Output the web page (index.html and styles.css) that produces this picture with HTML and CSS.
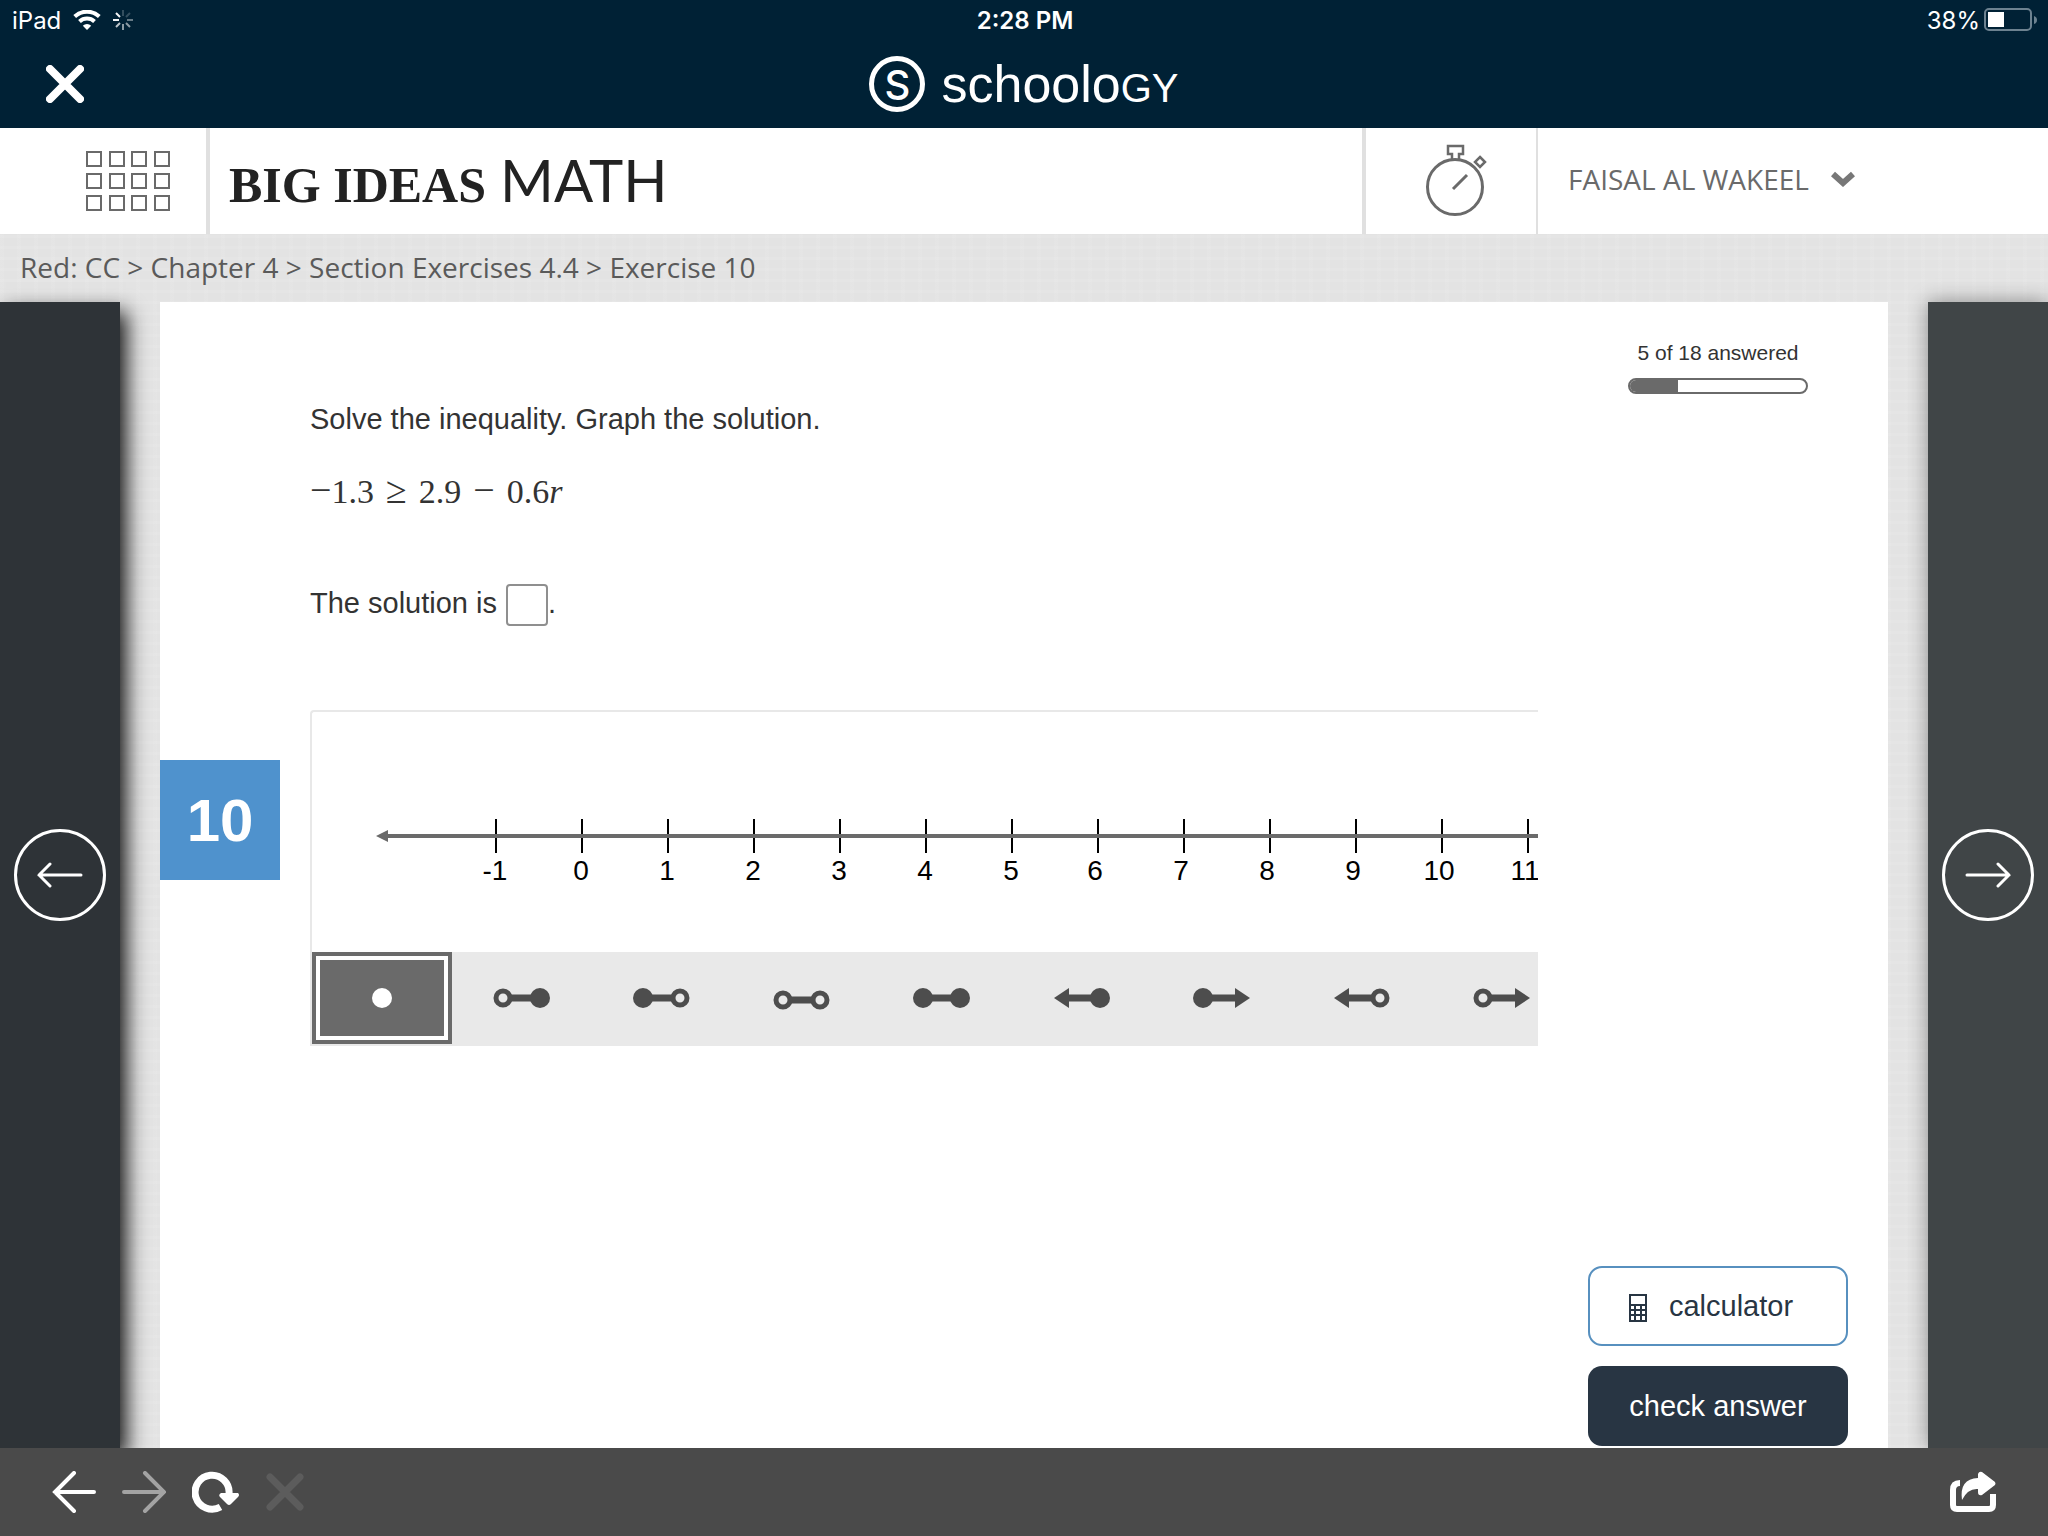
FILE: index.html
```
<!DOCTYPE html>
<html lang="en">
<head>
  <meta charset="UTF-8">
  <meta name="viewport" content="width=device-width, initial-scale=1.0">
  <title>Big Ideas Math - Exercise 10</title>
  <link rel="stylesheet" href="styles.css">
</head>
<body>
  <div class="status-bar">
    <div class="status-left">
      <span>iPad</span>
      <svg width="28" height="20" viewBox="0 0 28 20">
        <path d="M14 20l-4.2-4.3a6 6 0 0 1 8.4 0z" fill="#fff"/>
        <path d="M6.500 11.500a11 11 0 0 1 15 0M1.700 6.500a18 18 0 0 1 24.600 0" fill="none" stroke="#fff" stroke-width="4"/>
      </svg>
      <svg width="20" height="20" viewBox="0 0 20 20" stroke="#fff" stroke-width="2">
        <path d="M0 10h6M3 3l4 4" opacity=".95"/>
        <path d="M3 17l4-4" opacity=".75"/>
        <path d="M10 20v-6M17 17l-4-4" opacity=".55"/>
        <path d="M20 10h-6" opacity=".4"/>
        <path d="M17 3l-4 4M10 0v6" opacity=".2"/>
      </svg>
    </div>
    <div class="status-time">2:28 PM</div>
    <div class="status-right">
      <span>38%</span>
      <svg width="54" height="24" viewBox="0 0 54 24">
        <rect x="1" y="1" width="46" height="21" rx="4" fill="none" stroke="#6d8290" stroke-width="2"/>
        <rect x="4" y="4" width="16" height="15" fill="#fff"/>
        <path d="M50 8q3 1 3 4t-3 4z" fill="#6d8290"/>
      </svg>
    </div>
  </div>

  <header class="app-header">
    <button class="icon-button" aria-label="Close">
      <svg width="38" height="38" viewBox="0 0 38 38" stroke="#fff" stroke-width="8" stroke-linecap="round"><path d="M4 4l30 30M34 4L4 34"/></svg>
    </button>
    <div class="schoology">
      <span class="schoology-mark">S</span>
      <span class="schoology-name">schoolo<small>GY</small></span>
    </div>
  </header>

  <nav class="site-header">
    <button class="menu-button" aria-label="Menu">
      <svg width="86" height="62" viewBox="0 0 86 62" fill="none" stroke="#6a6a6a" stroke-width="2">
        <path d="M2 2h14v14H2zM25 2h14v14H25zM47 2h14v14H47zM70 2h14v14H70zM2 24h14v14H2zM25 24h14v14H25zM47 24h14v14H47zM70 24h14v14H70zM2 46h14v14H2zM25 46h14v14H25zM47 46h14v14H47zM70 46h14v14H70z"/>
      </svg>
    </button>
    <a class="brand" href="#"><b>BIG IDEAS</b> <span>MATH</span></a>
    <button class="timer-button" aria-label="Timer">
      <svg width="64" height="74" viewBox="0 0 64 74" fill="none" stroke="#6a6a6a" stroke-width="3">
        <circle cx="30" cy="43" r="27.500"/>
        <path d="M27 15v-5h-4V2h15v8h-4v5" stroke-width="2.500"/>
        <path d="M55 13l5 5-5 5-5-5z" stroke-width="2.500"/>
        <path d="M28 45l14-14"/>
      </svg>
    </button>
    <button class="user-button">
      FAISAL AL WAKEEL
      <svg width="24" height="16" viewBox="0 0 24 16" fill="none" stroke="#777" stroke-width="6"><path d="M2 3l10 9 10-9"/></svg>
    </button>
  </nav>

  <div class="breadcrumb">Red: CC &gt; Chapter 4 &gt; Section Exercises 4.4 &gt; Exercise 10</div>

  <main>
    <aside class="side prev">
      <button class="round" aria-label="Previous exercise">
        <svg width="46" height="26" viewBox="0 0 46 26" fill="none" stroke="#fff" stroke-width="3" stroke-linecap="round"><path d="M44 13H2M13 2L2 13l11 11"/></svg>
      </button>
    </aside>

    <section class="card">
      <div class="number">10</div>

      <div class="exercise">
        <p class="prompt">Solve the inequality. Graph the solution.</p>
        <p class="formula"><span class="op">−</span>1.3<span class="op spaced">≥</span>2.9<span class="op spaced">−</span>0.6<i>r</i></p>
        <p class="answer"><label for="solution">The solution is</label> <input type="text" id="solution">.</p>

        <div class="graph">
          <svg id="numberLine" width="1300" height="240"></svg>
          <div class="tools" id="tools"></div>
        </div>
      </div>

      <div class="actions">
        <div class="progress">
          <span>5 of 18 answered</span>
          <div class="progress-bar"><div style="width: 27%"></div></div>
        </div>
        <div class="buttons">
          <button class="calculator">
            <svg width="18" height="28" viewBox="0 0 18 28" fill="none" stroke="#283543" stroke-width="2"><path d="M1 1h16v26H1zM1 11h16M1 16h16M1 21h16M6 11v16M12 11v16"/></svg>
            calculator
          </button>
          <button class="check">check answer</button>
        </div>
      </div>
    </section>

    <aside class="side next">
      <button class="round" aria-label="Next exercise">
        <svg width="46" height="26" viewBox="0 0 46 26" fill="none" stroke="#fff" stroke-width="3" stroke-linecap="round"><path d="M2 13h42M33 2l11 11-11 11"/></svg>
      </button>
    </aside>
  </main>

  <footer class="browser-bar">
    <button class="icon-button" aria-label="Back">
      <svg width="44" height="42" viewBox="0 0 44 42" fill="none" stroke="#fff" stroke-width="4" stroke-linecap="round"><path d="M42 21H3M22 2L3 21l19 19"/></svg>
    </button>
    <button class="icon-button" aria-label="Forward">
      <svg width="44" height="42" viewBox="0 0 44 42" fill="none" stroke="#a3a3a3" stroke-width="4" stroke-linecap="round"><path d="M2 21h39M23 2l19 19-19 19"/></svg>
    </button>
    <button class="icon-button" aria-label="Reload">
      <svg width="48" height="42" viewBox="0 0 48 42">
        <path d="M37 23A17 17 0 1 0 28.500 36" fill="none" stroke="#fff" stroke-width="7"/>
        <path d="M29 22h17q2 2 0 4l-7 7q-2 2-4 0l-7-7q-2-2 1-4z" fill="#fff"/>
      </svg>
    </button>
    <button class="icon-button" aria-label="Stop">
      <svg width="38" height="38" viewBox="0 0 38 38" stroke="#5c5c5c" stroke-width="7" stroke-linecap="round"><path d="M4 4l30 30M34 4L4 34"/></svg>
    </button>
    <button class="icon-button share" aria-label="Share">
      <svg width="46" height="42" viewBox="0 0 46 42">
        <path d="M10 12q-7 0-7 7v15q0 4 4 4h32q4 0 4-4V23" fill="none" stroke="#fff" stroke-width="6"/>
        <path d="M12 29Q9 8 28 7V3q1-3 4-2l13 10q1 2 0 3L32 24q-4 1-4-3v-3q-10-1-16 11z" fill="#fff"/>
      </svg>
    </button>
  </footer>

  <script>
    const line = document.getElementById("numberLine");
    const tools = document.getElementById("tools");

    function renderLine() {
      const y = 124;
      let html = "";
      for (let n = -1; n <= 11; n++) {
        const x = 270 + n * 86;
        const labelX = n > 5 ? x - 3 : x - 1;
        html += `<path class="tick" d="M${x} ${y - 17}v34"/><text x="${labelX}" y="${y + 44}">${n}</text>`;
      }
      html += `<path class="axis" d="M72 ${y}H1300"/><path class="head" d="M64 ${y}l12-6v12z"/>`;
      line.innerHTML = html;
    }

    // each end is open, closed or arrow
    function drawEnd(type, left) {
      const cx = left ? 11 : 48;
      if (type === "open") return `<circle cx="${cx}" cy="12" r="7" fill="#e9e9e9" stroke="#4d4d4d" stroke-width="5"/>`;
      if (type === "closed") return `<circle cx="${cx}" cy="12" r="10" fill="#4d4d4d"/>`;
      return left ? `<path d="M2 12l15-10v20z" fill="#4d4d4d"/>` : `<path d="M58 12L43 2v20z" fill="#4d4d4d"/>`;
    }

    function renderTools() {
      const list = [
        ["open", "closed"], ["closed", "open"], ["open", "open"], ["closed", "closed"],
        ["arrow", "closed"], ["closed", "arrow"], ["arrow", "open"], ["open", "arrow"]
      ];
      let html = `<button class="tool selected" aria-label="point"><svg width="20" height="20"><circle cx="10" cy="10" r="10" fill="#fff"/></svg></button>`;
      list.forEach(([a, b]) => {
        html += `<button class="tool ${a}-${b}" aria-label="${a} ${b}"><svg width="60" height="24">
          <path d="M12 12h36" stroke="#4d4d4d" stroke-width="7"/>${drawEnd(a, true)}${drawEnd(b, false)}</svg></button>`;
      });
      tools.innerHTML = html;
    }

    renderLine();
    renderTools();
  </script>
</body>
</html>
```
FILE: styles.css
```
* {
  box-sizing: border-box;
}
body {
  margin: 0;
  min-height: 100vh;
  display: flex;
  flex-direction: column;
  font-family: "Liberation Sans", Arial, sans-serif;
  color: #333;
  background-color: #e3e3e3;
  background-image:
    repeating-linear-gradient(0deg, rgba(255,255,255,0.08) 0 3px, transparent 3px 11px),
    repeating-linear-gradient(90deg, rgba(255,255,255,0.06) 0 4px, transparent 4px 17px);
}
button {
  font: inherit;
  color: inherit;
  background: none;
  border: none;
  padding: 0;
}
svg {
  display: block;
  flex: none;
}
p {
  margin: 0;
}

.status-bar {
  display: grid;
  grid-template-columns: 1fr auto 1fr;
  align-items: center;
  height: 40px;
  padding: 0 10px 0 12px;
  background: #002135;
  color: white;
  font-family: Inter, sans-serif;
  font-size: 24px;
}
.status-left, .status-right {
  display: flex;
  align-items: center;
  gap: 12px;
}
.status-right {
  justify-content: flex-end;
  gap: 4px;
}
.status-time {
  font-weight: 600;
}

.app-header {
  display: grid;
  grid-template-columns: 1fr auto 1fr;
  align-items: center;
  height: 88px;
  padding: 0 46px;
  background: #002135;
  color: white;
}
.icon-button {
  justify-self: start;
}
.schoology {
  display: flex;
  align-items: center;
  gap: 16px;
}
.schoology-mark {
  display: flex;
  align-items: center;
  justify-content: center;
  width: 56px;
  height: 56px;
  border: 5px solid white;
  border-radius: 50%;
  font-family: Inter, sans-serif;
  font-size: 40px;
  font-weight: 500;
}
.schoology-name {
  font-size: 52px;
}
.schoology-name small {
  font-size: 40px;
}

.site-header {
  display: flex;
  height: 106px;
  background: white;
  color: #6a6a6a;
}
.menu-button {
  width: 210px;
  padding-left: 85px;
  border-right: 4px solid #e0e0e0;
}
.brand {
  flex: 1;
  display: flex;
  align-items: baseline;
  gap: 14px;
  padding: 17px 0 0 19px;
  color: #222;
  text-decoration: none;
}
.brand b {
  font-family: "Liberation Serif", serif;
  font-size: 50px;
}
.brand span {
  font-family: Lato, sans-serif;
  font-size: 58px;
}
.timer-button {
  display: flex;
  align-items: center;
  justify-content: center;
  width: 176px;
  padding-left: 12px;
  border-left: 4px solid #e0e0e0;
  border-right: 2px solid #e0e0e0;
}
.user-button {
  display: flex;
  align-items: center;
  gap: 22px;
  width: 510px;
  padding: 0 0 4px 30px;
  font-family: "Open Sans", sans-serif;
  font-size: 28px;
}
.breadcrumb {
  height: 68px;
  padding-left: 20px;
  font-family: "Open Sans", sans-serif;
  font-size: 28px;
  line-height: 66px;
  color: #5a5a5a;
}

main {
  flex: 1;
  display: grid;
  grid-template-columns: 120px 1fr 120px;
  gap: 40px;
}
.side {
  display: flex;
  align-items: center;
  justify-content: center;
}
.prev {
  background: #2e3337;
  box-shadow: 6px 10px 20px rgba(0,0,0,0.95);
}
.next {
  background: #404547;
  box-shadow: 0 0 20px rgba(0,0,0,0.4);
}
.round {
  display: flex;
  align-items: center;
  justify-content: center;
  width: 92px;
  height: 92px;
  border: 3px solid white;
  border-radius: 50%;
}

.card {
  display: grid;
  grid-template-columns: 120px minmax(0, 1fr) 260px;
  background: white;
  padding-right: 40px;
}
.number {
  display: flex;
  align-items: center;
  justify-content: center;
  height: 120px;
  margin-top: 458px;
  background: #4f92cd;
  color: white;
  font-size: 60px;
  font-weight: bold;
}
.exercise {
  margin: 100px 50px 0 30px;
  font-size: 29px;
}
.prompt {
  line-height: 34px;
}
.formula {
  margin-top: 34px;
  font-family: "Liberation Serif", serif;
  font-size: 34px;
  line-height: 40px;
}
.op {
  font-size: 38px;
}
.spaced {
  margin: 0 12px;
}
.answer {
  display: flex;
  height: 44px;
  margin-top: 72px;
  line-height: 38px;
}
.answer input {
  width: 42px;
  height: 42px;
  margin: 0 0 0 9px;
  padding: 0 4px;
  border: 2px solid #8f8f8f;
  border-radius: 4px;
  font: inherit;
}

.graph {
  margin-top: 82px;
  border: 2px solid #e8e8e8;
  border-right: none;
  border-bottom: none;
  border-radius: 4px 0 0 0;
  overflow: hidden;
}
.graph text {
  font-size: 28px;
  text-anchor: middle;
  fill: black;
}
.tick {
  stroke: black;
  stroke-width: 2;
}
.axis {
  stroke: #6a6a6a;
  stroke-width: 4;
}
.head {
  fill: #6a6a6a;
}
.tools {
  display: flex;
  height: 94px;
  background: #e9e9e9;
}
.tool {
  flex: none;
  display: flex;
  align-items: center;
  justify-content: center;
  width: 140px;
  height: 92px;
}
.tool.selected {
  background: #6a6a6a;
  border: 4px solid #6a6a6a;
  box-shadow: inset 0 0 0 4px white;
}
.tool.open-open {
  padding-top: 4px;
}

.actions {
  display: flex;
  flex-direction: column;
  justify-content: space-between;
  padding: 38px 0 2px;
}
.progress {
  width: 180px;
  margin-left: 40px;
  text-align: center;
  font-size: 21px;
  line-height: 26px;
}
.progress-bar {
  height: 16px;
  margin-top: 12px;
  border: 2px solid #6a6a6a;
  border-radius: 8px;
  overflow: hidden;
}
.progress-bar div {
  height: 100%;
  background: #6a6a6a;
}
.buttons {
  display: flex;
  flex-direction: column;
  gap: 20px;
  font-size: 29px;
}
.calculator, .check {
  display: flex;
  align-items: center;
  justify-content: center;
  height: 80px;
  border-radius: 14px;
}
.calculator {
  gap: 22px;
  padding-right: 14px;
  border: 2px solid #5790bf;
  color: #283543;
}
.calculator svg {
  margin-top: 4px;
}
.check {
  background: #283543;
  color: white;
}

.browser-bar {
  position: relative;
  display: flex;
  align-items: center;
  gap: 26px;
  height: 88px;
  padding: 0 52px;
  background: #4a4a4a;
}
.share {
  margin-left: auto;
}
```
